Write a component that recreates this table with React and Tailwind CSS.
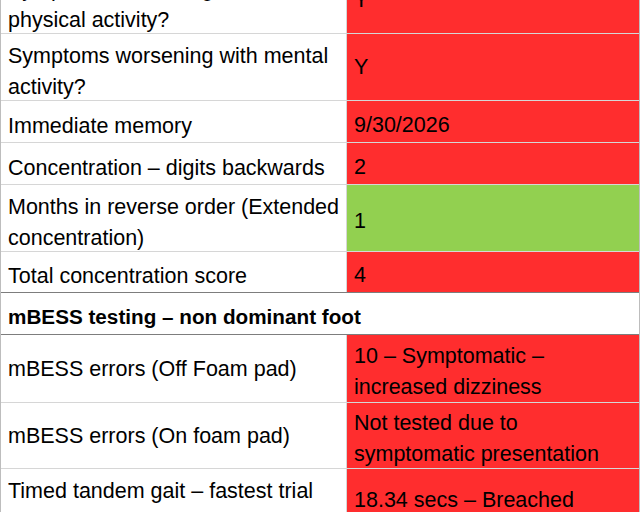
const RED = "bg-[#ff2d2e]";
const GREEN = "bg-[#92d050]";

const rows = [
  { h: "h-[67px]", label: ["Symptoms worsening with", "physical activity?"], value: ["Y"], bg: RED, vPad: "pt-[0px]" },
  { h: "h-[67px]", label: ["Symptoms worsening with mental", "activity?"], value: ["Y"], bg: RED, vPad: "pt-[0px]" },
  { h: "h-[42px]", label: ["Immediate memory"], value: ["9/30/2026"], bg: RED },
  { h: "h-[42px]", label: ["Concentration – digits backwards"], value: ["2"], bg: RED },
  { h: "h-[67px]", label: ["Months in reverse order (Extended", "concentration)"], value: ["1"], bg: GREEN },
  { h: "h-[40px]", label: ["Total concentration score"], value: ["4"], bg: RED, last: true },
];

const rows2 = [
  { h: "h-[68px]", label: ["mBESS errors (Off Foam pad)"], value: ["10 – Symptomatic –", "increased dizziness"], bg: RED, lPad: "pt-[1px]" },
  { h: "h-[66px]", label: ["mBESS errors (On foam pad)"], value: ["Not tested due to", "symptomatic presentation"], bg: RED, lPad: "pt-[1px]" },
];

function Lines({ lines, pad }) {
  return (
    <div className={pad}>
      {lines.map((l, i) => (
        <div key={i} className="whitespace-nowrap">
          {l}
        </div>
      ))}
    </div>
  );
}

function Row({ row }) {
  return (
    <div className={`flex ${row.h} ${row.last ? "" : "border-b border-[#d6d6d6]"}`}>
      <div className="w-[346px] shrink-0 border-r border-[#d6d6d6] pl-[7px] flex items-center bg-white">
        <Lines lines={row.label} pad={row.lPad || "pt-[9px]"} />
      </div>
      <div className={`flex-1 pl-[7px] flex items-center ${row.bg}`}>
        <Lines lines={row.value} pad={row.vPad || "pt-[7px]"} />
      </div>
    </div>
  );
}

export default function App() {
  return (
    <div className="w-[640px] h-[512px] overflow-hidden bg-white text-black font-['Liberation_Sans',Arial,sans-serif] text-[21.5px] leading-[31px]">
      <div className="mt-[-35px] border-x border-[#bdbdbd]">
        <div className="h-[2px] bg-white" />
        {rows.map((r, i) => (
          <Row key={i} row={r} />
        ))}

        {/* section header */}
        <div className="h-[43px] border-y border-[#7d7d7d] pl-[7px] flex items-center font-bold text-[20.7px]">
          <div className="pt-[6px] whitespace-nowrap">mBESS testing – non dominant foot</div>
        </div>

        {rows2.map((r, i) => (
          <Row key={i} row={r} />
        ))}

        <div className="flex h-[80px]">
          <div className="w-[346px] shrink-0 border-r border-[#d6d6d6] pl-[7px] pt-[7px] bg-white">
            <div className="whitespace-nowrap">Timed tandem gait – fastest trial</div>
          </div>
          <div className={`flex-1 pl-[7px] pt-[16px] ${RED}`}>
            <div className="whitespace-nowrap">18.34 secs – Breached</div>
          </div>
        </div>
      </div>
    </div>
  );
}
